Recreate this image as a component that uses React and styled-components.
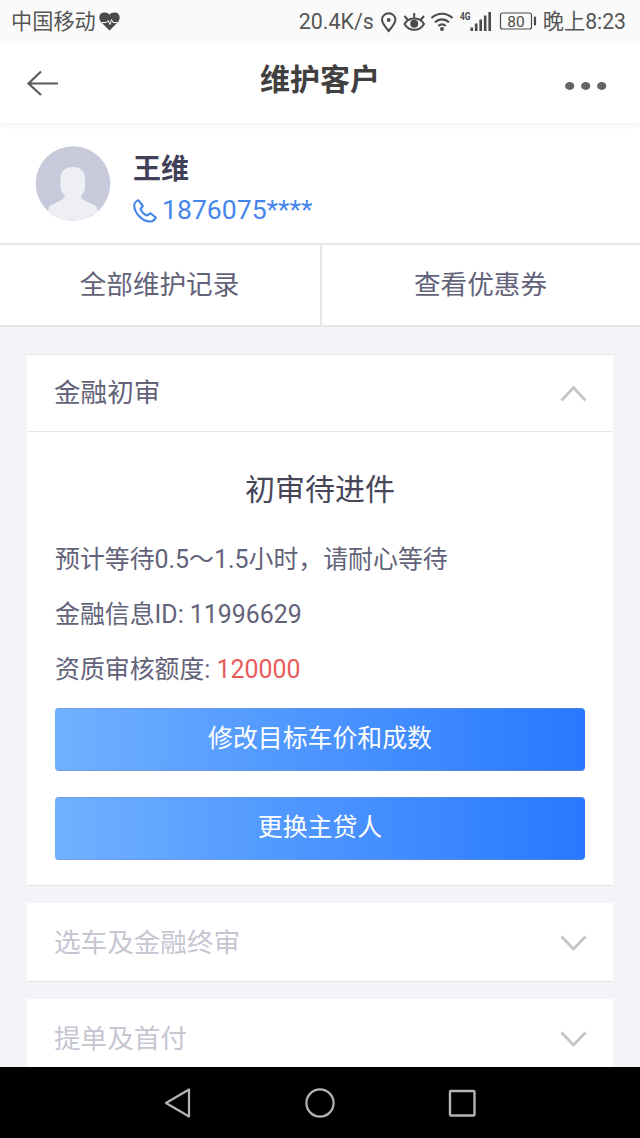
import React from "react";
import styled, { createGlobalStyle } from "styled-components";

const GlobalStyle = createGlobalStyle`
* { box-sizing: border-box; }
body {
margin: 0;
background: #f3f4f7;
font-family: Roboto, "Noto Sans CJK SC", sans-serif;
font-weight: 400;
}
`

const Screen = styled.div`
display: flex;
flex-direction: column;
width: 640px;
height: 1138px;
overflow: hidden;
background: #f3f4f7;
`

const StatusBar = styled.div`
display: flex;
flex: none;
justify-content: space-between;
height: 43px;
padding: 1px 14px 0 11px;
background: #fafafa;
color: #565656;
font-size: 21.2px;
line-height: 44px;
`

const StatusGroup = styled.div`
display: flex;
align-items: center;
height: 42px;
white-space: nowrap;
svg { display: block; flex: none; }
`

const Speed = styled.span`
width: 81px;
font-size: 21.4px;
`

const Clock = styled.span`
margin-left: 5px;
font-size: 21.2px;
`

const Header = styled.header`
display: flex;
flex: none;
align-items: center;
justify-content: space-between;
height: 80px;
padding: 0 33px 0 26px;
background: #fff;
box-shadow: 0 2px 6px rgba(0, 0, 0, 0.06);
z-index: 1;
svg { display: block; }
`

const Title = styled.h1`
margin: 0 0 7px 17px;
color: #404040;
font-size: 30px;
font-weight: 700;
line-height: 40px;
`

const Profile = styled.section`
display: flex;
flex: none;
height: 122px;
padding: 23px 0 0 35px;
border-bottom: 2px solid #e6e7eb;
background: #fff;
`

const ProfileText = styled.div`
margin: 4px 0 0 22px;
`

const Name = styled.div`
color: #404058;
font-size: 28px;
font-weight: 700;
line-height: 40px;
`

const Phone = styled.div`
display: flex;
align-items: center;
gap: 5px;
height: 40px;
color: #4586ec;
font-size: 26.6px;
line-height: 40px;
svg { display: block; margin-top: 2px; }
`

const Tabs = styled.div`
display: grid;
flex: none;
grid-template-columns: 322px 318px;
height: 82px;
border-bottom: 2px solid #e6e7eb;
background: #fff;
`

const Tab = styled.div`
border-right: ${({ $divided }) => ($divided ? "2px solid #e6e7eb" : "none")};
padding-right: 1px;
color: #626279;
font-size: 26.6px;
line-height: 79px;
text-align: center;
`

const Cards = styled.main`
display: flex;
flex: 1;
flex-direction: column;
gap: 17px;
min-height: 0;
padding: 27px 27px 0;
overflow: hidden;
`

const Card = styled.section`
flex: none;
border-top: 1px solid ${({ $open }) => ($open ? "#e8e9ed" : "#fff")};
border-bottom: 1px solid #e0e2e6;
background: #fff;
`

const CardHead = styled.div`
display: flex;
align-items: center;
justify-content: space-between;
height: 77px;
padding: 0 26px 0 27px;
border-bottom: ${({ $open }) => ($open ? "1px solid #e6e7eb" : "none")};
color: ${({ $open }) => ($open ? "#626279" : "#c6c6d1")};
font-size: 26.6px;
line-height: 40px;
svg { display: block; margin-top: 1px; }
`

const CardBody = styled.div`
height: 453px;
padding: 37px 28px 0;
`

const State = styled.h2`
margin: 0 0 21px;
color: #464658;
font-size: 30px;
font-weight: 400;
line-height: 42px;
text-align: center;
`

const Line = styled.p`
margin: 0;
color: #626279;
font-size: 24.9px;
line-height: 55px;
white-space: nowrap;
`

const Amount = styled.span`
color: #e95b5b;
`

const Button = styled.button`
display: block;
width: 100%;
height: 63px;
margin: ${({ $first }) => ($first ? "11px" : "26px")} 0 0;
padding: 0 0 1px;
border: 1px solid rgba(120, 140, 200, 0.45);
border-width: 1px 0;
border-radius: 4px;
background: linear-gradient(90deg, #70b1ff, #2878ff) border-box;
color: #fff;
font-family: inherit;
font-size: 24.9px;
line-height: 56px;
`

const NavBar = styled.nav`
display: flex;
flex: none;
align-items: center;
justify-content: space-between;
height: 71px;
padding: 0 162px;
background: #000;
svg { display: block; }
`

const HeartIcon = () => (
  <svg width="21" height="20" viewBox="0 0 21 20" style={{ marginLeft: 3 }}>
    <path d="M10.5 18.5 2 10C-1.5 5 1 .5 5.5.5c2.300 0 4 .7 5 2 1-1.300 2.700-2 5-2C20 .5 22.500 5 19 10Z" fill="#4b4b4b" />
    <path d="M3 10.500h4.500l1.500-2 2 4 1.500-5 1.500 3H18" fill="none" stroke="#fafafa" strokeWidth="1" />
  </svg>
)

// location, eye, wifi, signal and battery share one row
const StatusIcons = () => (
  <svg width="158" height="42" viewBox="380 0 158 42" fill="none" stroke="#4b4b4b" strokeWidth="2">
    <path d="M388.700 30C384.500 25 382 22 382 18.700a6.700 6.500 0 0 1 13.400 0c0 3.300-2.500 6.300-6.700 11.300Z" />
    <circle cx="388.700" cy="19" r="1.900" fill="#4b4b4b" stroke="none" />
    <path d="M404.500 23c4.500-7.300 15-7.300 19.500 0-4.500 7.700-15 7.700-19.500 0ZM414.200 17v-5M407.500 18.500l-3-3.500M421 18.500l3-3.500" />
    <circle cx="414.200" cy="22.800" r="4" fill="#4b4b4b" stroke="none" />
    <path d="M431.500 17c6-5.700 15-5.700 21 0M435 21.200c4-3.800 10-3.800 14 0M438.300 25c2.300-2 5.200-2 7.500 0" strokeWidth="2.200" />
    <circle cx="442" cy="28" r="2" fill="#4b4b4b" stroke="none" />
    <text x="460" y="19" fill="#4b4b4b" stroke="none" fontFamily="Roboto" fontWeight="700" fontSize="11.500" textLength="10.500" lengthAdjust="spacingAndGlyphs">4G</text>
    <path d="M471.700 30v-3.500M476.200 30v-7.500M480.700 30V18.500M485.200 30V14.500M489.700 30V11" strokeWidth="2.600" />
    <rect x="500.500" y="12" width="31" height="16" rx="2" strokeWidth="1.200" />
    <path d="M535 16.500v7" strokeWidth="2.200" strokeLinecap="round" />
    <text x="516" y="25.500" fill="#4b4b4b" stroke="none" fontFamily="Roboto" fontSize="15.500" textAnchor="middle">80</text>
  </svg>
)

const BackIcon = () => (
  <svg width="32" height="26" viewBox="0 0 32 26" fill="none" stroke="#5a5a5e" strokeWidth="2.200">
    <path d="M15 1.500 2.500 13.500 15 25M2.500 13.500H32" />
  </svg>
)

const MoreIcon = () => (
  <svg width="42" height="10" viewBox="0 0 42 10" fill="#626262" style={{ marginTop: 5 }}>
    <ellipse cx="4.700" cy="5" rx="4.600" ry="3.900" />
    <ellipse cx="20.700" cy="5" rx="4.600" ry="3.900" />
    <ellipse cx="36.700" cy="5" rx="4.600" ry="3.900" />
  </svg>
)

const Avatar = () => (
  <svg width="76" height="76" viewBox="0 0 76 76">
    <circle cx="38" cy="37.500" r="37.300" fill="#c8cadc" />
    <path d="M25.500 32c0-7 5-11 12.300-11S50 25 50 32v8c0 5-2 8-4 10 0 5 9 6 15 10l2 5A37.300 37.300 0 0 1 13 65l1-4c5-5 15-6 16-11-3-3-4.500-6-4.500-10Z" fill="#eeeff4" />
  </svg>
)

const PhoneIcon = () => (
  <svg width="24" height="24" viewBox="0 0 24 24" fill="none" stroke="currentColor" strokeWidth="2.100" strokeLinejoin="round">
    <path d="M5.500 1.300C3.500 1.800 1.200 4 1.200 6.500 1.500 14 9 22.500 17 22.500c2.500 0 4.700-1.500 5.800-4L17.500 14.200l-3.500 2.300C11.500 15.500 8.500 12.500 7.500 9.800L9.800 7Z" />
  </svg>
)

const Chevron = ({ open }) => (
  <svg width="27" height="17" viewBox="0 0 27 17" fill="none" stroke="#c5c5c5" strokeWidth="2.800">
    <path d={open ? "M1.500 15.500 13.500 2.500 25.500 15.500" : "M1.500 1.500 13.500 14 25.500 1.500"} />
  </svg>
)

const App = () => {
  return (
    <>
      <GlobalStyle />
      <Screen>
        <StatusBar>
          <StatusGroup>中国移动<HeartIcon /></StatusGroup>
          <StatusGroup>
            <Speed>20.4K/s</Speed>
            <StatusIcons />
            <Clock>晚上8:23</Clock>
          </StatusGroup>
        </StatusBar>
        <Header>
          <BackIcon />
          <Title>维护客户</Title>
          <MoreIcon />
        </Header>
        <Profile>
          <Avatar />
          <ProfileText>
            <Name>王维</Name>
            <Phone><PhoneIcon />1876075****</Phone>
          </ProfileText>
        </Profile>
        <Tabs>
          <Tab $divided>全部维护记录</Tab>
          <Tab>查看优惠券</Tab>
        </Tabs>
        <Cards>
          <Card $open>
            <CardHead $open>金融初审<Chevron open /></CardHead>
            <CardBody>
              <State>初审待进件</State>
              <Line>预计等待0.5～1.5小时，请耐心等待</Line>
              <Line>金融信息ID: 11996629</Line>
              <Line>资质审核额度: <Amount>120000</Amount></Line>
              <Button $first>修改目标车价和成数</Button>
              <Button>更换主贷人</Button>
            </CardBody>
          </Card>
          <Card><CardHead>选车及金融终审<Chevron /></CardHead></Card>
          <Card><CardHead>提单及首付<Chevron /></CardHead></Card>
        </Cards>
        <NavBar>
          <svg width="30" height="32" viewBox="0 0 30 32" fill="none" stroke="#b4b4b4" strokeWidth="2.200" strokeLinejoin="round">
            <path d="M27 2.500v27L4 16Z" />
          </svg>
          <svg width="30" height="32" viewBox="0 0 30 32" fill="none" stroke="#b4b4b4" strokeWidth="2.200">
            <circle cx="15" cy="16" r="13.600" />
          </svg>
          <svg width="30" height="32" viewBox="0 0 30 32" fill="none" stroke="#b4b4b4" strokeWidth="2.400">
            <rect x="2" y="4" width="24.500" height="24.500" rx="1" />
          </svg>
        </NavBar>
      </Screen>
    </>
  )
}

export default App;
